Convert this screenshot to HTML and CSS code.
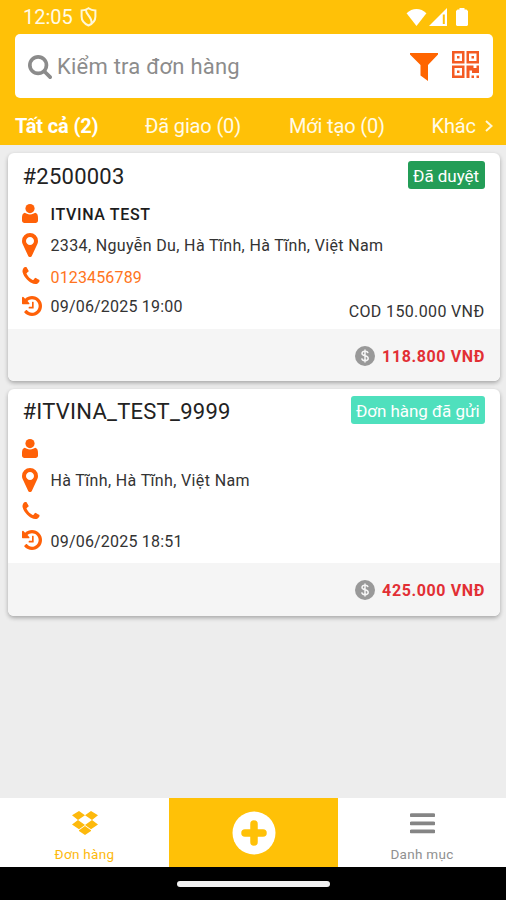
FILE: index.html
```html
<!DOCTYPE html>
<html lang="vi">
<head>
<meta charset="utf-8">
<title>Đơn hàng</title>
<link rel="stylesheet" href="styles.css">
</head>
<body>
<svg class="defs" aria-hidden="true">
  <symbol id="user" viewBox="0 0 16 19"><circle cx="8" cy="4.600" r="4.600"/><path d="M2.800 8.800C4 9.300 5.600 10.400 8 10.400s4-1.100 5.200-1.600C15.500 9.300 16 11.500 16 14v2.500c0 1.500-1 2.500-2.500 2.500h-11C1 19 0 18 0 16.500V14c0-2.500.5-4.700 2.800-5.200Z"/></symbol>
  <symbol id="pin" viewBox="384 128 1024 1536"><path d="M1152 640q0-106-75-181t-181-75-181 75-75 181 75 181 181 75 181-75 75-181zm256 0q0 109-33 179l-364 774q-16 33-47.500 52t-67.500 19-67.500-19-46.500-52l-365-774q-33-70-33-179 0-212 150-362t362-150 362 150 150 362z"/></symbol>
  <symbol id="phone" viewBox="192 128 1408 1408"><path d="M1600 1240q0 27-10 70.500t-21 68.500q-21 50-122 106-94 51-186 51-27 0-53-3.500t-57.500-12.500-47-14.500-55.500-20.500-49-18q-98-35-175-83-127-79-264-216t-216-264q-48-77-83-175-3-9-18-49t-20.500-55.500-14.500-47-12.500-57.500-3.500-53q0-92 51-186 56-101 106-122 25-11 68.500-21t70.500-10q14 0 21 3 18 6 53 76 11 19 30 54t35 63.500 31 53.500q3 4 17.500 25t21.500 35.500 7 28.500q0 20-28.500 50t-62 55-62 53-28.500 46q0 9 5 22.500t8.500 20.500 14 24 11.500 19q76 137 174 235t235 174q2 1 19 11.500t24 14 20.500 8.500 22.500 5q18 0 46-28.500t53-62 55-62 50-28.500q14 0 28.500 7t35.500 21.500 25 17.500q25 15 53.500 31t63.500 35 54 30q70 35 76 53 3 7 3 21z"/></symbol>
  <symbol id="history" viewBox="128 128 1536 1536"><path d="M1664 896q0 156-61 298t-164 245-245 164-298 61q-172 0-327-72.500t-264-204.500q-7-10-6.500-22.500t8.500-20.500l137-138q10-9 25-9 16 2 23 12 73 95 179 147t225 52q104 0 198.500-40.500t163.500-109.500 109.500-163.500 40.500-198.500-40.500-198.500-109.500-163.500-163.500-109.500-198.500-40.500q-98 0-188 35.500t-160 101.500l137 138q31 30 14 69-17 40-59 40h-448q-26 0-45-19t-19-45v-448q0-42 40-59 39-17 69 14l130 129q107-101 244.500-156.500t284.500-55.500q156 0 298 61t245 164 164 245 61 298zm-640-288v448q0 14-9 23t-23 9h-320q-14 0-23-9t-9-23v-64q0-14 9-23t23-9h224v-352q0-14 9-23t23-9h64q14 0 23 9t9 23z"/></symbol>
  <symbol id="coin" viewBox="0 0 20 20"><circle cx="10" cy="10" r="10" fill="#999"/><path d="M13 7.200C12.700 5.900 11.500 5.300 10 5.300c-1.700 0-3 .8-3 2.200 0 3 6.200 1.600 6.200 4.800 0 1.500-1.400 2.400-3.200 2.400s-3-.9-3.300-2.300M10 3.500v13" fill="none" stroke="#f5f5f5" stroke-width="1.500"/></symbol>
</svg>
<div class="screen">
  <header class="header">
    <div class="status">
      <span class="clock">12:05</span>
      <svg class="shield" viewBox="0 0 17 20"><path d="M8.500 1.300C6.500 2.700 4 3.400 1.600 3.500v6c0 4.200 2.900 7.300 6.900 9 4-1.700 6.900-4.800 6.900-9v-6C13 3.400 10.500 2.700 8.500 1.300ZM6 2.800C5.500 8 12.500 9.500 11.500 16.500" fill="none" stroke="#fff8d8" stroke-width="2"/></svg>
      <div class="signals">
        <svg class="wifi" viewBox="0 0 21 18"><path d="M0 4.500C6-1.500 15-1.500 21 4.500L10.500 18Z"/></svg>
        <svg class="cell" viewBox="0 0 18 18"><path fill-rule="evenodd" d="M18 0v18H0ZM13.800 6.500v9.500h2V6.500Z"/></svg>
        <svg class="battery" viewBox="0 0 12 18"><path d="M3.500 0h5v1.500H10.500L12 3V17l-1 1H1l-1-1V3L1.500 1.500H3.500Z"/></svg>
      </div>
    </div>
    <div class="search">
      <svg class="lens" viewBox="64 128 1664 1664"><path d="M1216 832q0-185-131.500-316.500t-316.500-131.500-316.500 131.500-131.500 316.500 131.500 316.500 316.500 131.500 316.500-131.500 131.500-316.500zm512 832q0 52-38 90t-90 38q-54 0-90-38l-343-342q-179 124-399 124-143 0-273.500-55.500t-225-150-150-225-55.500-273.500 55.500-273.500 150-225 225-150 273.500-55.500 273.500 55.500 225 150 150 225 55.500 273.500q0 220-124 399l343 343q37 37 37 90z"/></svg>
      <span class="placeholder">Kiểm tra đơn hàng</span>
      <svg class="funnel" viewBox="0 0 28 28"><path d="M0 0h28v1.500L18 12v16L10.500 22.500V12L0 1.500Z"/></svg>
      <svg class="qr" viewBox="0 0 27 27"><path fill-rule="evenodd" d="M0 0h12.500v12.500H0ZM2.500 2.500v7.500H10V2.500ZM14.500 0H27v12.500H14.500ZM17 2.500v7.500h7.500V2.500ZM0 14.500h12.500V27H0ZM2.500 17v7.500H10V17ZM5 5h2.500v2.500H5ZM19.500 5H22v2.500h-2.500ZM5 19.500h2.500V22H5ZM14.500 14.500h7V17h3v-2.500H27V22h-7v-2.500h-2.500V27h-3ZM19.500 24.500H22V27h-2.500ZM24.500 24.500H27V27h-2.500Z"/></svg>
    </div>
    <nav class="tabs">
      <span class="tab tab-active">Tất cả (2)</span>
      <span class="tab tab-done">Đã giao (0)</span>
      <span class="tab tab-new">Mới tạo (0)</span>
      <span class="tab tab-other">Khác</span>
      <svg class="chevron" viewBox="0 0 8 12"><path d="m1 1 5.500 5L1 11" fill="none" stroke="#fff8d8" stroke-width="2"/></svg>
    </nav>
  </header>
  <main class="list">
    <article class="card">
      <div class="body">
        <div class="top"><h2 class="code">#2500003</h2><span class="badge approved">Đã duyệt</span></div>
        <div class="row row-user"><svg class="i-user"><use href="#user"/></svg><b class="name">ITVINA TEST</b></div>
        <div class="row row-pin"><svg class="i-pin"><use href="#pin"/></svg><span class="addr">2334, Nguyễn Du, Hà Tĩnh, Hà Tĩnh, Việt Nam</span></div>
        <div class="row row-phone"><svg class="i-phone"><use href="#phone"/></svg><span class="tel">0123456789</span></div>
        <div class="row row-time"><svg class="i-history"><use href="#history"/></svg><span class="date">09/06/2025 19:00</span><span class="cod">COD 150.000 VNĐ</span></div>
      </div>
      <div class="total"><svg class="i-coin"><use href="#coin"/></svg><b class="sum">118.800 VNĐ</b></div>
    </article>
    <article class="card compact">
      <div class="body">
        <div class="top"><h2 class="code">#ITVINA_TEST_9999</h2><span class="badge sent">Đơn hàng đã gửi</span></div>
        <div class="row row-user"><svg class="i-user"><use href="#user"/></svg></div>
        <div class="row row-pin"><svg class="i-pin"><use href="#pin"/></svg><span class="addr">Hà Tĩnh, Hà Tĩnh, Việt Nam</span></div>
        <div class="row row-phone"><svg class="i-phone"><use href="#phone"/></svg></div>
        <div class="row row-time"><svg class="i-history"><use href="#history"/></svg><span class="date">09/06/2025 18:51</span></div>
      </div>
      <div class="total"><svg class="i-coin"><use href="#coin"/></svg><b class="sum">425.000 VNĐ</b></div>
    </article>
  </main>
  <nav class="bottom">
    <div class="item item-active">
      <svg class="box" viewBox="0 0 26 24"><path d="M7 0l6 4.300L6 9 0 4.300ZM19 0l7 4.300L20 9l-7-4.700ZM6 9l7 5L7 18.300 0 13.500ZM20 9l6 4.500-7 4.800-6-4.300ZM13 15l6 4.300v.7L13 24l-6-4v-.7Z"/></svg>
      <span class="label">Đơn hàng</span>
    </div>
    <div class="item add">
      <svg class="plus" viewBox="0 0 44 44"><circle cx="22" cy="22" r="21.500" fill="#fff"/><path d="M22 13v18M13 22h18" stroke="#ffc107" stroke-width="7.500" stroke-linecap="round"/></svg>
    </div>
    <div class="item">
      <svg class="menu" viewBox="0 0 25 21"><path d="M1.500 2.200h22M1.500 10.300h22M1.500 18.400h22" stroke="#858585" stroke-width="3.800" stroke-linecap="round"/></svg>
      <span class="label">Danh mục</span>
    </div>
  </nav>
  <div class="gesture"><div class="pill"></div></div>
</div>
</body>
</html>
```
FILE: styles.css
```css
* { box-sizing: border-box; }
body { margin: 0; font-family: Roboto, sans-serif; color: #333; }
.defs { display: none; }
svg { display: block; flex: none; }
span, b, h2 { white-space: nowrap; }

.screen { width: 506px; height: 900px; display: flex; flex-direction: column; background: #ededed; overflow: hidden; }

.header { height: 145px; flex: none; background: #ffc107; }
.status { height: 34px; padding: 0 38.5px 0 23px; display: flex; align-items: center; }
.clock { font-size: 20px; color: #fffbe8; }
.shield { width: 17px; height: 20px; margin-left: 7px; }
.signals { margin-left: auto; display: flex; align-items: center; fill: #fff; }
.wifi { width: 21px; height: 17px; margin-right: 2px; }
.cell { width: 18px; height: 18px; margin-right: 9px; }
.battery { width: 12px; height: 18px; }

.search { height: 63.5px; margin: 0 13.5px 0 14.5px; padding: 0 13.5px; display: flex; align-items: center; background: #fff; border-radius: 5px; }
.lens { width: 24px; height: 24px; fill: #8b8b8b; margin-top: 2px; }
.placeholder { margin-left: 5px; padding-top: 2px; font-size: 22px; letter-spacing: .22px; color: #8c8c8c; }
.funnel { width: 28px; height: 28px; margin-left: auto; margin-top: 3px; fill: #ff6500; }
.qr { width: 27px; height: 27px; margin-left: 14px; margin-bottom: 2px; fill: #f45a22; }

.tabs { height: 47.5px; padding: 9px 13px 0 15px; display: flex; align-items: center; color: #fffbe8; font-size: 20px; letter-spacing: -.15px; }
.tab-active { width: 130px; font-weight: 700; color: #fff; }
.tab-done { width: 144px; }
.tab-new { width: 142.500px; }
.chevron { width: 8px; height: 12px; margin-left: auto; }

.list { flex: 1; padding: 8px 6.500px 0 7.500px; display: flex; flex-direction: column; gap: 8px; }
.card { height: 228px; background: #fff; border-radius: 6px; overflow: hidden; box-shadow: 0 2px 4px rgba(0, 0, 0, .3); display: flex; flex-direction: column; }
.body { height: 176px; flex: none; padding: 0 15px 0 14.500px; }
.total { flex: 1; padding: 2px 14.500px 0 0; display: flex; align-items: center; justify-content: flex-end; gap: 7px; background: #f5f5f5; }
.compact { height: 227px; }
.compact .body { height: 174px; }
.compact .total { padding-top: 1px; }
.top { height: 46px; display: flex; justify-content: space-between; align-items: center; }
.compact .top { height: 45px; }
.code { margin: 0 0 0 .5px; font-size: 22px; font-weight: 400; letter-spacing: .25px; color: #222; }
.badge { height: 28px; margin-bottom: 2px; padding: 2px 5px 0; display: flex; align-items: center; border-radius: 3px; font-size: 17px; letter-spacing: -.05px; color: #fff; }
.compact .badge { margin-bottom: 3px; }
.approved { padding: 2px 5.500px 0; background: #239d57; }
.sent { background: #4fe0bd; }

.row { display: grid; grid-template-columns: 28.500px 1fr auto; align-items: center; font-size: 16px; letter-spacing: .36px; fill: #ff6108; }
.row-user { height: 30px; }
.row-pin { height: 32px; }
.row-phone { height: 31px; }
.row-time { height: 28px; }
.i-user { width: 16px; height: 19px; margin-top: -2px; }
.i-pin { width: 16px; height: 24px; }
.i-phone { width: 18px; height: 17px; margin-top: -2px; }
.i-history { width: 20px; height: 20px; margin-top: -2px; }
.name { font-weight: 500; letter-spacing: .65px; color: #1c1c1c; }
.tel { padding-top: 1px; letter-spacing: .15px; color: #ff7420; }
.date { letter-spacing: .2px; }
.cod { padding-top: 10px; }
.i-coin { width: 20px; height: 20px; }
.sum { font-size: 16px; font-weight: 700; letter-spacing: .62px; color: #e22f34; }

.bottom { height: 69px; flex: none; display: grid; grid-template-columns: 169px 169px 168px; background: #fff; }
.item { display: flex; flex-direction: column; align-items: center; color: #909090; }
.item-active { color: #fdb90c; fill: #fdb90c; }
.add { background: #ffc107; justify-content: center; }
.plus { width: 44px; height: 44px; }
.box { width: 26px; height: 24px; margin-top: 13px; }
.menu { width: 25px; height: 21px; margin-top: 15px; }
.label { height: 16px; line-height: 16px; font-size: 13.500px; letter-spacing: .3px; margin-top: 11px; }
.menu + .label { margin-top: 12px; }

.gesture { height: 33px; flex: none; background: #000; display: flex; justify-content: center; }
.pill { width: 153px; height: 6px; margin-top: 13.500px; border-radius: 3px; background: #f2f2f2; }
```
